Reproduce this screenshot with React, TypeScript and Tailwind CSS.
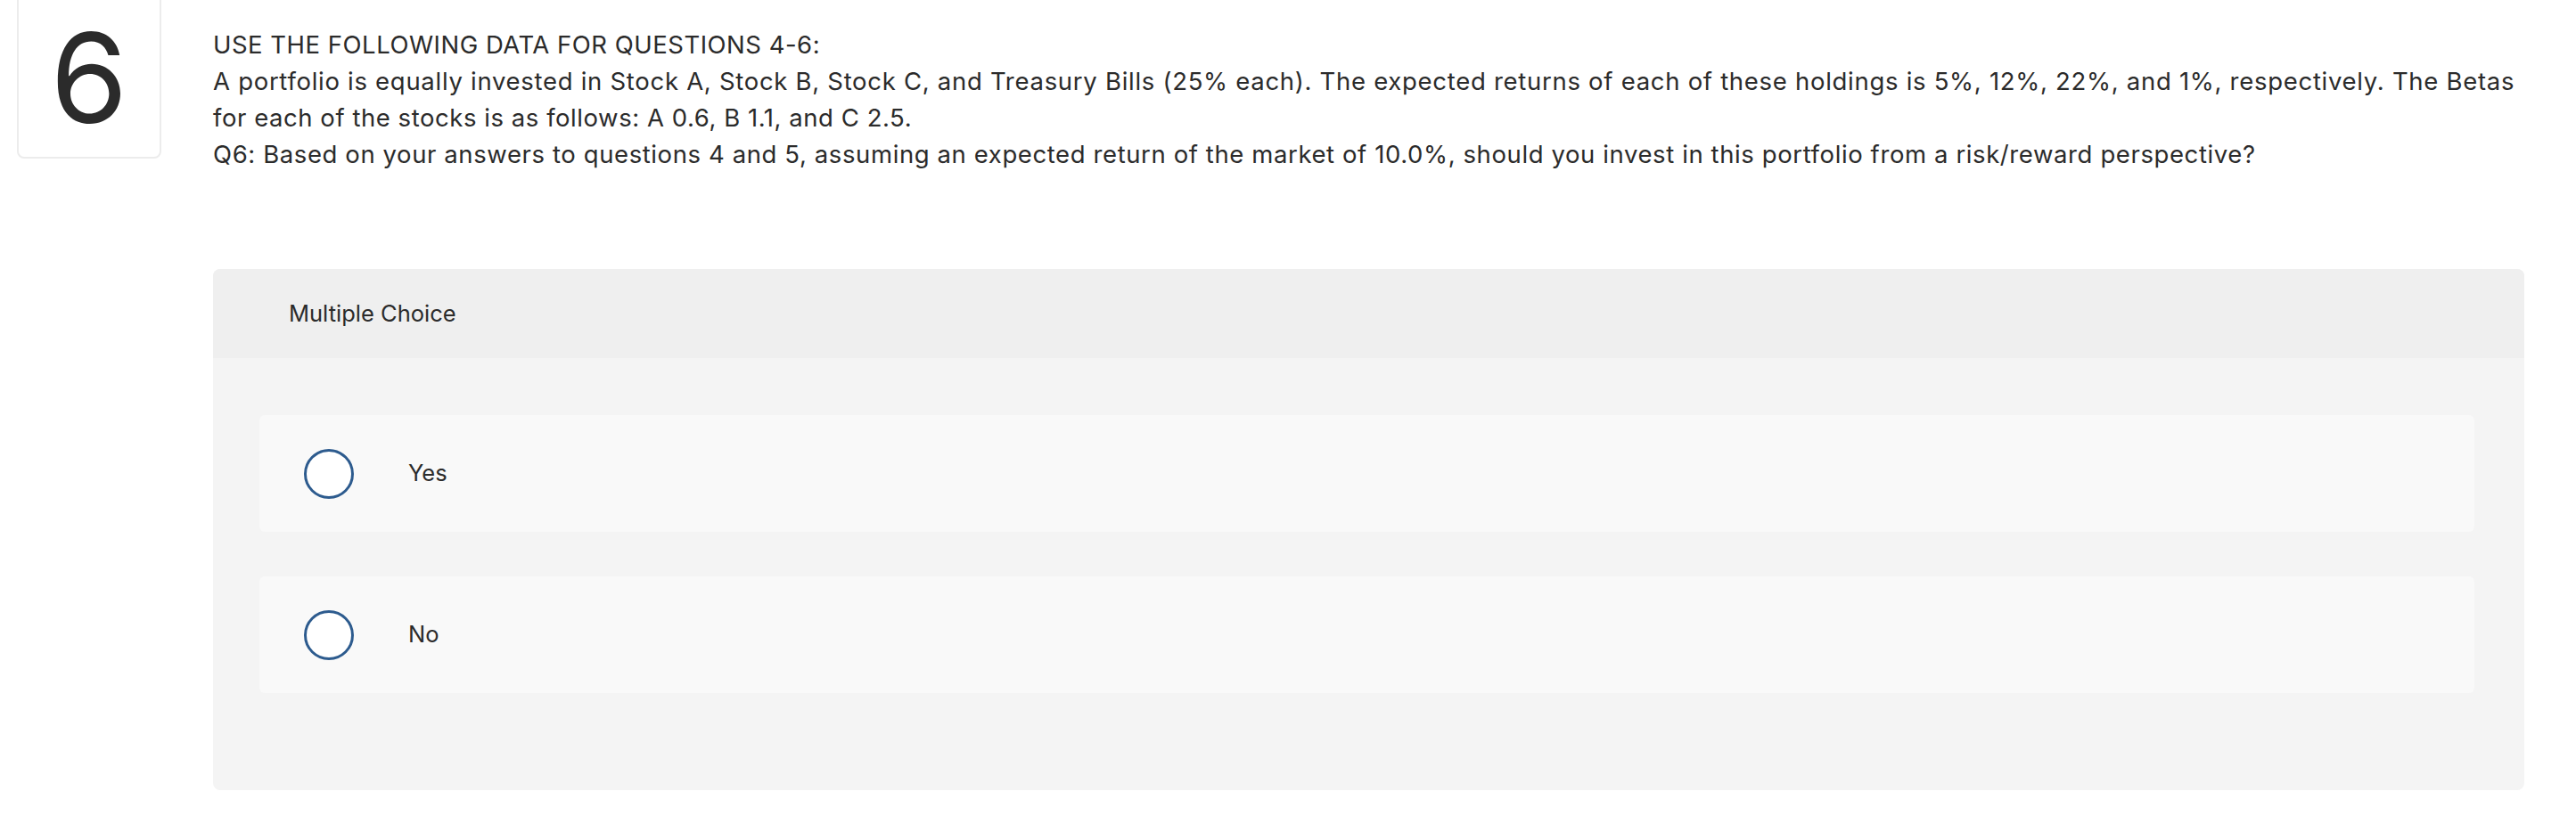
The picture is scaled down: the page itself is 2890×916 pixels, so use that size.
const options = ["Yes", "No"];

export default function App() {
  return (
    <div className="flex w-[2890px] min-h-[916px] bg-white text-[#2b2b2b] font-['Inter',sans-serif]">
      <div className="ml-[19px] mt-[-10px] flex h-[188px] w-[162px] shrink-0 items-center justify-center rounded-lg border-2 border-[#ececec] pt-[6px] text-[140px] leading-none">
        6
      </div>
      <div className="ml-[58px] mr-[58px] flex-1">
        <div className="pt-[30px] text-[27.5px] leading-[41px] tracking-[0.71px]">
          <p className="tracking-[0.5px]">USE THE FOLLOWING DATA FOR QUESTIONS 4-6:</p>
          <p>
            A portfolio is equally invested in Stock A, Stock B, Stock C, and Treasury Bills (25% each). The expected
            returns of each of these holdings is 5%, 12%, 22%, and 1%, respectively. The Betas
            <br />
            <span className="tracking-[0.55px]">for each of the stocks is as follows: A 0.6, B 1.1, and C 2.5.</span>
          </p>
          <p className="tracking-[0.6px]">
            Q6: Based on your answers to questions 4 and 5, assuming an expected return of the market of 10.0%, should
            you invest in this portfolio from a risk/reward perspective?
          </p>
        </div>
        <div className="mt-[108px] overflow-hidden rounded-lg bg-[#f4f4f4]">
          <div className="flex h-[100px] items-center bg-[#efefef] pl-[85px] text-[25.5px]">Multiple Choice</div>
          <div className="flex flex-col gap-[50px] pb-[109px] pl-[52px] pr-[56px] pt-[64px]">
            {options.map((o) => (
              <label key={o} className="flex h-[131px] items-center rounded-md bg-[#f9f9f9] pl-[50px]">
                <span className="h-[56px] w-[56px] rounded-full border-[3px] border-[#2d5b8e] bg-white" />
                <span className="ml-[61px] text-[25.5px]">{o}</span>
              </label>
            ))}
          </div>
        </div>
      </div>
    </div>
  );
}
